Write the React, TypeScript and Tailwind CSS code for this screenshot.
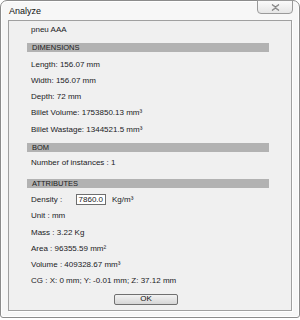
import React from "react";

const Row = ({ children, h = "h-[16.25px]" }: { children: React.ReactNode; h?: string }) => (
  <div className={`${h} flex items-center pl-[4px] whitespace-nowrap`}>{children}</div>
);

const Bar = ({ label, mt }: { label: string; mt: string }) => (
  <div className={`${mt} h-[9px] bg-[#b2b2b2] flex items-center pl-[5px] text-[7.5px] leading-none text-[#1a1a1a]`}>
    {label}
  </div>
);

export default function App() {
  return (
    <div
      className="relative w-[300px] h-[320px] bg-white"
      style={{ fontFamily: '"Liberation Sans", Arial, sans-serif' }}
    >
      <div className="absolute inset-0 bottom-[2px] rounded-t-[7px] rounded-b-[3px] border border-[#8c8c8c] bg-[#f7f7f7] shadow-[inset_0_0_0_1px_#ffffff] flex flex-col">
        {/* title */}
        <div className="h-[19px] flex items-center pl-[8px] text-[9px] text-[#111] pt-[2px]">Analyze</div>
        {/* close button */}
        <div className="absolute top-[-1px] right-[6px] w-[36px] h-[14px] border border-[#9a9a9a] rounded-b-[4px] bg-gradient-to-b from-[#fbfbfb] to-[#e6e6e6] flex items-center justify-center">
          <svg width="9" height="7" viewBox="0 0 9 7">
            <path d="M1 0.5 L4.5 3 L8 0.5 M1 6.5 L4.5 4 L8 6.5" stroke="#7a7a7a" strokeWidth="1.2" fill="none" />
            <path d="M1 0.5 L8 6.5 M8 0.5 L1 6.5" stroke="#9a9a9a" strokeWidth="0.8" fill="none" />
          </svg>
        </div>
        {/* panel */}
        <div className="mx-[7px] h-[291px] border border-[#a0a0a0] bg-[#f0f0f0] shadow-[1px_1px_0_#ffffff] flex flex-col pl-[18px] pr-[22px] pt-[1px] text-[8px] text-[#1a1a24]">
          <Row h="h-[16px]">pneu AAA</Row>
          <Bar label="DIMENSIONS" mt="mt-[5px]" />
          <div className="mt-[4.5px] flex flex-col">
            <Row>Length: 156.07 mm</Row>
            <Row>Width: 156.07 mm</Row>
            <Row>Depth: 72 mm</Row>
            <Row>Billet Volume: 1753850.13 mm³</Row>
            <Row>Billet Wastage: 1344521.5 mm³</Row>
          </div>
          <Bar label="BOM" mt="mt-[5.25px]" />
          <div className="mt-[3px]">
            <Row h="h-[16px]">Number of instances : 1</Row>
          </div>
          <Bar label="ATTRIBUTES" mt="mt-[8px]" />
          <div className="mt-[3.85px] flex flex-col">
            <Row h="h-[16.3px]">
              <span className="w-[45px]">Density :</span>
              <span className="w-[30px] h-[11px] bg-white border border-[#6e6e6e] flex items-center justify-end pr-[2px] leading-none">
                7860.0
              </span>
              <span className="ml-[6px]">Kg/m³</span>
            </Row>
            <Row h="h-[16.3px]">Unit : mm</Row>
            <Row h="h-[16.3px]">Mass : 3.22 Kg</Row>
            <Row h="h-[16.3px]">Area : 96355.59 mm²</Row>
            <Row h="h-[16.3px]">Volume : 409328.67 mm³</Row>
            <Row h="h-[16.3px]">CG : X: 0 mm; Y: -0.01 mm; Z: 37.12 mm</Row>
          </div>
          <div className="mt-[4.35px] flex justify-center pr-[0px]">
            <div className="ml-[-4px] w-[64px] h-[11px] border border-[#707070] rounded-[2px] bg-gradient-to-b from-[#f2f2f2] to-[#d6d6d6] flex items-center justify-center text-[8px] leading-none text-[#111]">
              OK
            </div>
          </div>
        </div>
      </div>
    </div>
  );
}
